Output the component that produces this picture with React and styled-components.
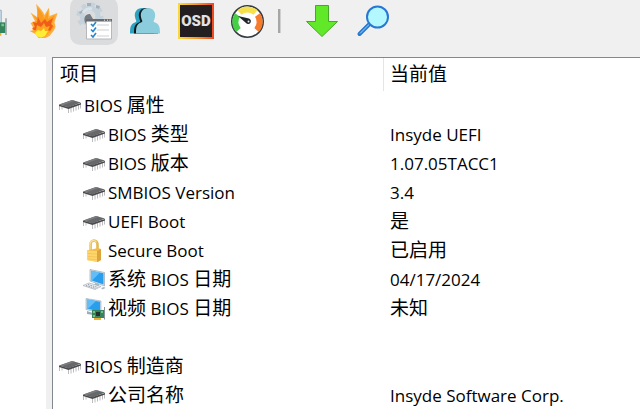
import React from 'react';
import styled, {createGlobalStyle} from 'styled-components';

const rows = [
    {level: 0, icon: 'chip', name: 'BIOS 属性', value: ''},
    {level: 1, icon: 'chip', name: 'BIOS 类型', value: 'Insyde UEFI'},
    {level: 1, icon: 'chip', name: 'BIOS 版本', value: '1.07.05TACC1'},
    {level: 1, icon: 'chip', name: 'SMBIOS Version', value: '3.4'},
    {level: 1, icon: 'chip', name: 'UEFI Boot', value: '是'},
    {level: 1, icon: 'lock', name: 'Secure Boot', value: '已启用'},
    {level: 1, icon: 'computer', name: '系统 BIOS 日期', value: '04/17/2024'},
    {level: 1, icon: 'video', name: '视频 BIOS 日期', value: '未知'},
    {level: 0, icon: null, name: '', value: ''},
    {level: 0, icon: 'chip', name: 'BIOS 制造商', value: ''},
    {level: 1, icon: 'chip', name: '公司名称', value: 'Insyde Software Corp.'},
];

export default function App(){
    return (
        <Window>
            <GlobalStyle />
            <Toolbar>
                <ToolButton aria-label="Video"><VideoLarge /></ToolButton>
                <ToolButton aria-label="Burn"><Flame /></ToolButton>
                <ToolButton aria-label="Preferences" $active><Preferences /></ToolButton>
                <ToolButton aria-label="Users"><Users /></ToolButton>
                <ToolButton aria-label="On-screen display"><OsdBox>OSD</OsdBox></ToolButton>
                <ToolButton aria-label="Benchmark"><Gauge /></ToolButton>
                <Separator />
                <ToolButton aria-label="Update"><Arrow /></ToolButton>
                <ToolButton aria-label="Find"><Magnifier /></ToolButton>
            </Toolbar>
            <Panes>
                <TreePane />
                <ListPane>
                    <Table>
                        <thead>
                            <tr>
                                <HeadCell $first><Label text="项目" /></HeadCell>
                                <HeadCell><Label text="当前值" /></HeadCell>
                            </tr>
                        </thead>
                        <tbody>
                            {rows.map((row,index)=>(
                                <tr key={index}>
                                    <Cell>
                                        <Item $level={row.level}>
                                            {row.icon && <RowIcon name={row.icon} />}
                                            <Label text={row.name} />
                                        </Item>
                                    </Cell>
                                    <Cell $value><Label text={row.value} /></Cell>
                                </tr>
                            ))}
                        </tbody>
                    </Table>
                </ListPane>
            </Panes>
        </Window>
    );
}

/* Chinese runs are set a little larger than the latin ones */
function Label({text}){
    const runs = text.split(/([\u4e00-\u9fff]+)/).filter(Boolean);
    return (
        <span>
            {runs.map((run,index)=>(
                /[\u4e00-\u9fff]/.test(run) ? <Han key={index}>{run}</Han> : run
            ))}
        </span>
    );
}

function RowIcon({name}){
    if(name === 'lock') return <Lock />;
    if(name === 'computer') return <Computer />;
    if(name === 'video') return <Video />;
    return <Chip />;
}

/* row icons */

function Chip(){
    return (
        <Small viewBox="0 0 24 24">
            <path d="M1.5 12v4M4 12.500v3M10.500 14v5M13 13.500v5M15.500 12.500v5M18 11.500v5M20.500 10.500v5M22.500 9.500v5" stroke="#b4b4ba" strokeWidth=".9" fill="none" />
            <path d="M1 10.500 10 13 23 9v1.500L10.500 15 1 12z" fill="#4a4a4d" />
            <path d="M1 10.500 14 6l9 2.500-12.500 5z" fill="#67686a" />
            <path d="M2 10.500 14 6l3 .8L4.500 11.300z" fill="#7c7d80" />
        </Small>
    );
}

function Lock(){
    return (
        <Small viewBox="0 0 24 24">
            <path d="M8.500 12V5.500a3.500 4 0 0 1 7 0V11" fill="none" stroke="#e3b850" strokeWidth="2.600" />
            <path d="M8 12V5.500a3.500 4 0 0 1 6.500-2" fill="none" stroke="#fae29a" strokeWidth="1.200" />
            <path d="M5 11.500 16 9l3 1v11l-3 2-11-2z" fill="#f1bb47" />
            <path d="M5 11.500 15 12v11L5 21z" fill="#ffd66d" />
            <path d="M15 12l4-2v11l-4 2z" fill="#dda43a" />
            <path d="M6 14.500l9 .5M6 17.500l9 .5M6 20l9 .8" stroke="#f4c659" />
        </Small>
    );
}

function Computer(){
    return (
        <Small viewBox="0 0 24 24">
            <path d="M8 1.500 22.500 4.500v13.500L8 13z" fill="#d8e4ee" stroke="#869dab" strokeWidth=".6" />
            <path d="M9 2.700 21.500 5.300v11.200L9 12.300z" fill="#299eed" />
            <path d="M9 2.700 18 4.600 10 12.500 9 12.300z" fill="#64bdf7" />
            <path d="m13 15 4 1v3h-5z" fill="#a7b8c4" />
            <path d="M1 17.500 7 15l12 3.500-6 3z" fill="#eff2f4" stroke="#a4aeb7" strokeWidth=".7" />
            <path d="m4 17.500 10 3M6 16.500l10 3" stroke="#8e9aa5" strokeDasharray="1.500 1" />
            <path d="m19 20 3-1 1.500 1-3 1.500z" fill="#a9b8c3" />
        </Small>
    );
}

function VideoShapes(){
    return (
        <g>
            <path d="M4 1.500 19 4v12L4 12.500z" fill="#c8dbe9" stroke="#839baa" strokeWidth=".5" />
            <path d="M5 2.500 18 4.700v10L5 11.500z" fill="#299eed" />
            <path d="M5 2.500 14 4 6 11.700 5 11.500z" fill="#64bdf7" />
            <path d="m5 14 6 2v2l-6-1z" fill="#9caebb" />
            <path d="M10 13h12v8H10z" fill="#34855d" />
            <path d="M11 14h2v2h-2zm8 0h2v2h-2zm-8 4h2v2h-2z" fill="#7dbe8d" />
            <path d="M14 15h4v4h-4z" fill="#26302c" />
            <path d="M22.500 10v12.500" stroke="#8b9698" />
            <path d="M12 21h7v2h-7z" fill="#edaf32" />
        </g>
    );
}

function Video(){
    return <Small viewBox="0 0 24 24"><VideoShapes /></Small>;
}

/* toolbar icons */

function VideoLarge(){
    return <Large viewBox="0 0 24 24"><VideoShapes /></Large>;
}

function Flame(){
    return (
        <Large viewBox="0 0 32 32">
            <path d="M9-1c4 4 7 7 8.500 11L22 2.500l.5 8.500 8-3c-1 4-2 6-3 9l1 5-2 4-4 5-4 2h-7l-3-4-6-3 5-1-4-7 5-1L3.500 7.500 10 12c.5-5 0-9-1-13z" fill="#fbb040" />
            <path d="M10 2c4 4 6 7 7 12l4-8v8l7-4c-1 4-2 6-3 9l2 3-4 5-5 3h-7l-3-4-3-2 3-1-3-6 5-1-4-6 4 3c1-4 1-7 0-11z" fill="#fb9a1d" />
            <path d="m11 12 3 6 4-4 2 3 6-4-2 6 2 2-3 5-5 2-9-1-4-4 3-1-2-5 4 1z" fill="#f25c1a" />
            <path d="m10 20 4 2 3-4 2 4 4-1-2 4 2 1-4 5-7 1-4-4-4-2 5-1z" fill="#ffa51f" />
            <path d="m11 25 3 1 3-3 1 3 3 0-3 5-4 1.500-4-1-2-4z" fill="#ffec35" />
        </Large>
    );
}

function Preferences(){
    return (
        <Large viewBox="0 0 32 32">
            <g fill="none" stroke="#c6d2db">
                <circle cx="12" cy="11" r="8" strokeWidth="5" />
                <circle cx="12" cy="11" r="11.500" strokeWidth="4" strokeDasharray="4.500 4.530" />
            </g>
            <path d="M1 7l4-2 1 2-4 2zM9-2h4v3H9zM18 0l4 1-1 3-3-1z" fill="#a4b0b8" />
            <path d="M5 8a8 8 0 0 1 9-4" fill="none" stroke="#dae3e9" strokeWidth="3" />
            <path d="M12 9c-6 0-7 6-4 10v-5h7z" fill="#727b81" />
            <path d="M8.500 14.500h25v19.500h-25z" fill="#fff" stroke="#b5b7b9" />
            <path d="M8 14h26v2.500H8z" fill="#696b6e" />
            <path d="M26 15.200h1m2 0h1m1.500 0h1" stroke="#eee" />
            <path d="M19 20h12M19 25h12M19 31h12" stroke="#cfcfcf" />
            <path d="m13 19 2 2 3-4m-5 7.500 2 2 3-4m-5 7.500 2 2 3-4" fill="none" stroke="#2785d0" strokeWidth="1.600" />
        </Large>
    );
}

function Users(){
    const body = 'M14 1c5 0 8 4 7 9-.5 3-2 4-1 5 5 2 6 4 6 11.500H2C2 19 3 17 8 15c1-1-.5-2-1-5C6 5 9 1 14 1z';
    return (
        <Large viewBox="0 0 32 32">
            <path d={body} transform="translate(-1 2)" fill="#2ba2c0" />
            <path d={body} transform="translate(3 2)" fill="#0b171c" />
            <path d={body} transform="translate(5 2)" fill="#8bcddc" />
        </Large>
    );
}

function Gauge(){
    return (
        <Large viewBox="0 0 32 32">
            <circle cx="16.500" cy="16.500" r="15.700" fill="#fff" stroke="#333b40" strokeWidth="1.600" />
            <g fill="none" strokeWidth="6">
                <path d="M7.500 25a12 12 0 0 1-1-15" stroke="#45cf42" />
                <path d="M8.500 7.500a12 12 0 0 1 16 0" stroke="#f6e14d" />
                <path d="M26.500 10a12 12 0 0 1-1 15" stroke="#f77b2d" />
            </g>
            <path d="m7 11 11 2.500a2.800 2.800 0 1 1-3 4.500z" fill="#20272a" />
            <circle cx="17.500" cy="16.500" r="1" fill="#eee" />
        </Large>
    );
}

function Arrow(){
    return (
        <Large viewBox="0 0 32 32">
            <path d="M9.500.5h13v16h9L16 31.500.5 16.500h9z" fill="#60e829" stroke="#46a72a" />
        </Large>
    );
}

function Magnifier(){
    return (
        <Large viewBox="0 0 32 32">
            <path d="M2.500 29 13 18.500" stroke="#2878cf" strokeWidth="4" strokeLinecap="round" />
            <path d="M3 28.500 13 18.500" stroke="#98dcfa" strokeWidth="1" />
            <circle cx="20.500" cy="12" r="10.500" fill="#b3f8ff" stroke="#2878d2" strokeWidth="2" />
        </Large>
    );
}

const GlobalStyle = createGlobalStyle`
body{
    margin:0;
    background:#f0f0f0;
    overflow:hidden;
}
*{
    box-sizing:border-box;
}
`;

const Window = styled.div`
display:flex;
flex-direction:column;
height:100vh;
overflow:hidden;
color:#000;
font-family:"Open Sans","Noto Sans CJK SC",sans-serif;
font-size:17px;
`;

const Han = styled.span`
font-size:19px;
line-height:1;
`;

/* the strip is scrolled a little to the left and up */
const Toolbar = styled.div`
display:flex;
flex:none;
gap:3px;
margin:-3px 0 0 -32px;
padding-bottom:12px;
background:#f0f0f0;
`;

const ToolButton = styled.button`
display:flex;
align-items:center;
justify-content:center;
flex:none;
width:48px;
height:48px;
padding:0;
border:0;
border-radius:10px;
background:${props=>props.$active ? '#dadcde' : 'transparent'};
`;

const Separator = styled.div`
width:3px;
height:24px;
margin:12px 14px 0 4px;
background:#a6a6a6;
border-right:1px solid #d0d0d0;
`;

const OsdBox = styled.span`
display:flex;
align-items:center;
justify-content:center;
width:36px;
height:36px;
border:2px solid;
border-image:linear-gradient(90deg,#fbd83b,#f79a2d,#ee4923) 1;
background:#231f20;
color:#e2e2e6;
font:900 15px Roboto,"Liberation Sans",sans-serif;
`;

const Large = styled.svg`
flex:none;
width:32px;
height:32px;
overflow:visible;
`;

const Small = styled.svg`
flex:none;
width:24px;
height:24px;
`;

const Panes = styled.div`
display:flex;
flex:1;
gap:6px;
min-height:0;
`;

const TreePane = styled.div`
flex:none;
width:46px;
background:#fff;
`;

const ListPane = styled.div`
flex:1;
min-width:0;
overflow:hidden;
border-top:1px solid #828790;
border-left:1px solid #828790;
background:#fff;
`;

const Table = styled.table`
width:100%;
table-layout:fixed;
border-spacing:0;
`;

const HeadCell = styled.th`
width:${props=>props.$first ? '331px' : 'auto'};
height:33px;
padding:${props=>props.$first ? '0 7px' : '0 6px'};
border-right:${props=>props.$first ? '1px solid #e5e5e5' : '0'};
font-weight:normal;
line-height:29px;
text-align:left;
`;

const Cell = styled.td`
height:29px;
padding:${props=>props.$value ? '0 6px' : '0'};
line-height:29px;
white-space:nowrap;
`;

const Item = styled.div`
display:flex;
align-items:center;
gap:2px;
height:29px;
padding-left:${props=>props.$level*24 + 5}px;
`;
